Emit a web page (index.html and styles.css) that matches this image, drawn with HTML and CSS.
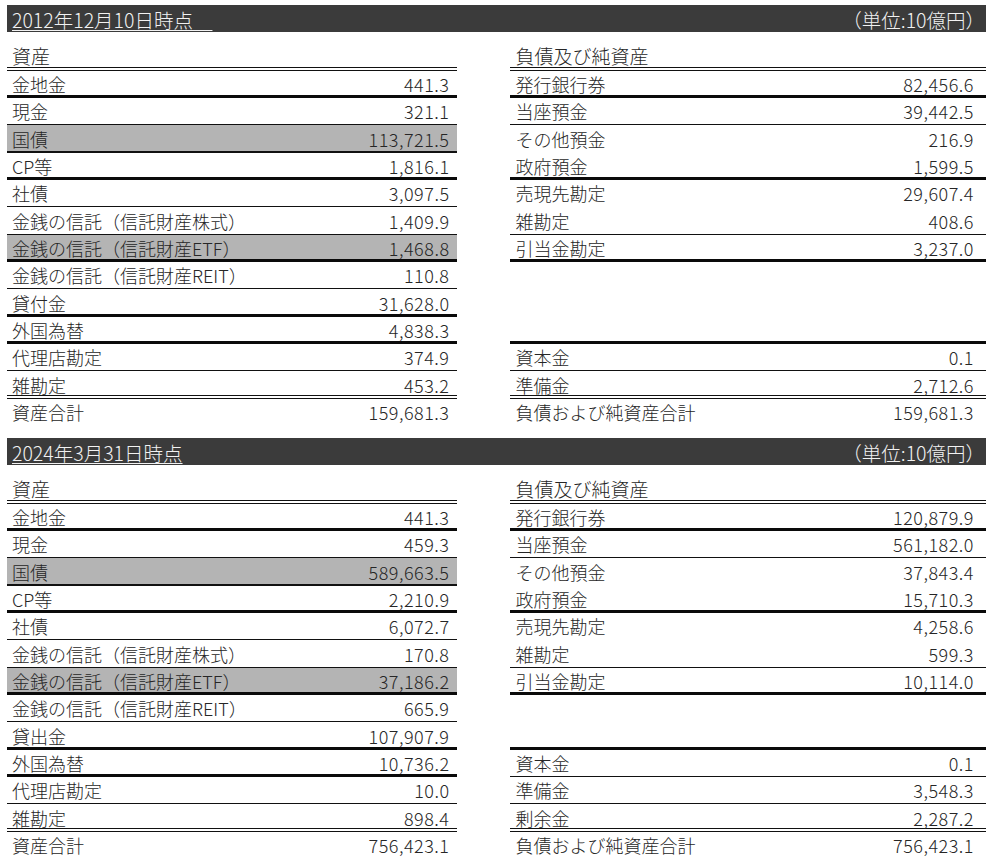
FILE: index.html
```html
<!DOCTYPE html>
<html lang="ja">
<head>
<meta charset="utf-8">
<title>日本銀行 貸借対照表</title>
<link rel="stylesheet" href="styles.css">
</head>
<body>
<div class="page">

  <section class="sec">
    <div class="bar"><span class="date">2012年12月10日時点　</span><span class="unit">（単位:10億円）</span></div>
    <div class="tables">
      <div class="tbl left">
        <div class="head"><span>資産</span></div>
        <div class="row thick"><span>金地金</span><span>441.3</span></div>
        <div class="row thin"><span>現金</span><span>321.1</span></div>
        <div class="row mid gray"><span>国債</span><span>113,721.5</span></div>
        <div class="row thick"><span>CP等</span><span>1,816.1</span></div>
        <div class="row thin"><span>社債</span><span>3,097.5</span></div>
        <div class="row thin"><span>金銭の信託（信託財産株式）</span><span>1,409.9</span></div>
        <div class="row thick gray"><span>金銭の信託（信託財産ETF）</span><span>1,468.8</span></div>
        <div class="row thin"><span>金銭の信託（信託財産REIT）</span><span>110.8</span></div>
        <div class="row thick"><span>貸付金</span><span>31,628.0</span></div>
        <div class="row thick"><span>外国為替</span><span>4,838.3</span></div>
        <div class="row thin"><span>代理店勘定</span><span>374.9</span></div>
        <div class="row dbl"><span>雑勘定</span><span>453.2</span></div>
        <div class="row total"><span>資産合計</span><span>159,681.3</span></div>
      </div>
      <div class="tbl right">
        <div class="head"><span>負債及び純資産</span></div>
        <div class="row thick"><span>発行銀行券</span><span>82,456.6</span></div>
        <div class="row thin"><span>当座預金</span><span>39,442.5</span></div>
        <div class="row"><span>その他預金</span><span>216.9</span></div>
        <div class="row thick"><span>政府預金</span><span>1,599.5</span></div>
        <div class="row"><span>売現先勘定</span><span>29,607.4</span></div>
        <div class="row thin"><span>雑勘定</span><span>408.6</span></div>
        <div class="row thick"><span>引当金勘定</span><span>3,237.0</span></div>
        <div class="row"></div>
        <div class="row"></div>
        <div class="row thick"></div>
        <div class="row thin"><span>資本金</span><span>0.1</span></div>
        <div class="row dbl"><span>準備金</span><span>2,712.6</span></div>
        <div class="row total"><span>負債および純資産合計</span><span>159,681.3</span></div>
      </div>
    </div>
  </section>

  <section class="sec">
    <div class="bar"><span class="date">2024年3月31日時点</span><span class="unit">（単位:10億円）</span></div>
    <div class="tables">
      <div class="tbl left">
        <div class="head"><span>資産</span></div>
        <div class="row thick"><span>金地金</span><span>441.3</span></div>
        <div class="row thin"><span>現金</span><span>459.3</span></div>
        <div class="row mid gray"><span>国債</span><span>589,663.5</span></div>
        <div class="row thick"><span>CP等</span><span>2,210.9</span></div>
        <div class="row thin"><span>社債</span><span>6,072.7</span></div>
        <div class="row thin"><span>金銭の信託（信託財産株式）</span><span>170.8</span></div>
        <div class="row thick gray"><span>金銭の信託（信託財産ETF）</span><span>37,186.2</span></div>
        <div class="row thin"><span>金銭の信託（信託財産REIT）</span><span>665.9</span></div>
        <div class="row thick"><span>貸出金</span><span>107,907.9</span></div>
        <div class="row thick"><span>外国為替</span><span>10,736.2</span></div>
        <div class="row thin"><span>代理店勘定</span><span>10.0</span></div>
        <div class="row dbl"><span>雑勘定</span><span>898.4</span></div>
        <div class="row total"><span>資産合計</span><span>756,423.1</span></div>
      </div>
      <div class="tbl right">
        <div class="head"><span>負債及び純資産</span></div>
        <div class="row thick"><span>発行銀行券</span><span>120,879.9</span></div>
        <div class="row thin"><span>当座預金</span><span>561,182.0</span></div>
        <div class="row"><span>その他預金</span><span>37,843.4</span></div>
        <div class="row thick"><span>政府預金</span><span>15,710.3</span></div>
        <div class="row"><span>売現先勘定</span><span>4,258.6</span></div>
        <div class="row thin"><span>雑勘定</span><span>599.3</span></div>
        <div class="row thick"><span>引当金勘定</span><span>10,114.0</span></div>
        <div class="row"></div>
        <div class="row thick"></div>
        <div class="row thin"><span>資本金</span><span>0.1</span></div>
        <div class="row thin"><span>準備金</span><span>3,548.3</span></div>
        <div class="row dbl"><span>剰余金</span><span>2,287.2</span></div>
        <div class="row total"><span>負債および純資産合計</span><span>756,423.1</span></div>
      </div>
    </div>
  </section>

</div>
</body>
</html>
```
FILE: styles.css
```css
html, body {
  margin: 0;
  padding: 0;
  background: #ffffff;
}

body {
  font-family: "Noto Sans CJK JP", "Noto Sans", sans-serif;
  font-size: 18px;
  font-weight: 300;
  color: #262626;
}

.page {
  width: 979px;
  padding: 5px 0 0 7px;
}

.sec {
  margin-bottom: 12px;
}

.bar {
  height: 27px;
  background: #3b3b3b;
  color: #f2f2f2;
  display: flex;
  justify-content: space-between;
  align-items: flex-end;
  padding: 0 1px 0 5px;
  font-size: 19.5px;
  line-height: 25px;
}

.date {
  text-decoration: underline;
  text-underline-offset: 2px;
  text-decoration-thickness: 1px;
}

.tables {
  display: flex;
  gap: 53px;
}

.tbl.left {
  width: 450px;
}

.tbl.right {
  width: 477px;
}

.head {
  height: 39px;
  box-sizing: border-box;
  border-bottom: 4px double #111;
  display: flex;
  align-items: flex-end;
  padding-left: 5px;
  font-size: 19px;
  line-height: 22px;
}

.right .head {
  padding-left: 6px;
}

.row {
  height: 27px;
  box-sizing: border-box;
  display: flex;
  justify-content: space-between;
  align-items: flex-start;
  padding: 2px 7px 0 5px;
  line-height: 22px;
}

.row:nth-child(3n+1) {
  height: 28px;
  padding-top: 3px;
}

.row span + span {
  letter-spacing: 0.5px;
}

.right .row {
  padding-left: 6px;
  padding-right: 12px;
}

.row.thick {
  border-bottom: 3px solid #0a0a0a;
}

.row.thin {
  border-bottom: 1px solid #111;
}

.row.mid {
  border-bottom: 2px solid #111;
}

.row.dbl {
  border-bottom: 4px double #111;
}

.row.gray {
  background: #b4b4b4;
}
```
